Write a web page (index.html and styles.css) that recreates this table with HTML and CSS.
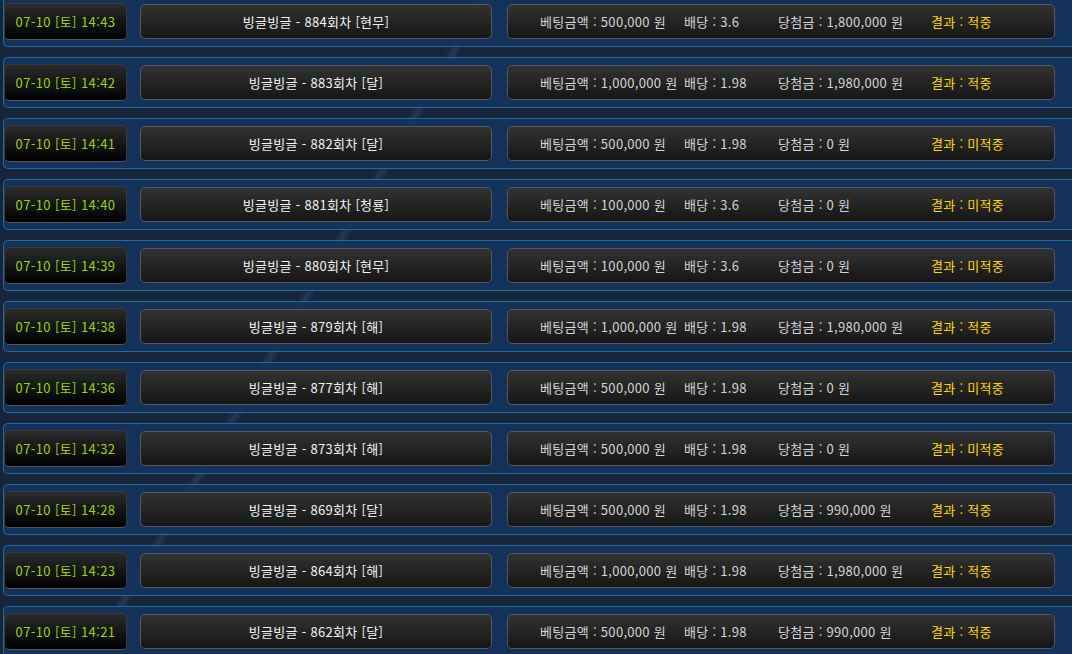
FILE: index.html
```html
<!DOCTYPE html>
<html lang="ko">
<head>
<meta charset="utf-8">
<title>베팅 내역</title>
<link rel="stylesheet" href="styles.css">
</head>
<body>
<div class="list">
  <div class="row"><div class="date">07-10 [토] 14:43</div><div class="name">빙글빙글 - 884회차 [현무]</div><div class="info"><span class="c1">베팅금액 : 500,000 원</span><span class="c2">배당 : 3.6</span><span class="c3">당첨금 : 1,800,000 원</span><span class="res">결과 : 적중</span></div></div>
  <div class="row"><div class="date">07-10 [토] 14:42</div><div class="name">빙글빙글 - 883회차 [달]</div><div class="info"><span class="c1">베팅금액 : 1,000,000 원</span><span class="c2">배당 : 1.98</span><span class="c3">당첨금 : 1,980,000 원</span><span class="res">결과 : 적중</span></div></div>
  <div class="row"><div class="date">07-10 [토] 14:41</div><div class="name">빙글빙글 - 882회차 [달]</div><div class="info"><span class="c1">베팅금액 : 500,000 원</span><span class="c2">배당 : 1.98</span><span class="c3">당첨금 : 0 원</span><span class="res">결과 : 미적중</span></div></div>
  <div class="row"><div class="date">07-10 [토] 14:40</div><div class="name">빙글빙글 - 881회차 [청룡]</div><div class="info"><span class="c1">베팅금액 : 100,000 원</span><span class="c2">배당 : 3.6</span><span class="c3">당첨금 : 0 원</span><span class="res">결과 : 미적중</span></div></div>
  <div class="row"><div class="date">07-10 [토] 14:39</div><div class="name">빙글빙글 - 880회차 [현무]</div><div class="info"><span class="c1">베팅금액 : 100,000 원</span><span class="c2">배당 : 3.6</span><span class="c3">당첨금 : 0 원</span><span class="res">결과 : 미적중</span></div></div>
  <div class="row"><div class="date">07-10 [토] 14:38</div><div class="name">빙글빙글 - 879회차 [해]</div><div class="info"><span class="c1">베팅금액 : 1,000,000 원</span><span class="c2">배당 : 1.98</span><span class="c3">당첨금 : 1,980,000 원</span><span class="res">결과 : 적중</span></div></div>
  <div class="row"><div class="date">07-10 [토] 14:36</div><div class="name">빙글빙글 - 877회차 [해]</div><div class="info"><span class="c1">베팅금액 : 500,000 원</span><span class="c2">배당 : 1.98</span><span class="c3">당첨금 : 0 원</span><span class="res">결과 : 미적중</span></div></div>
  <div class="row"><div class="date">07-10 [토] 14:32</div><div class="name">빙글빙글 - 873회차 [해]</div><div class="info"><span class="c1">베팅금액 : 500,000 원</span><span class="c2">배당 : 1.98</span><span class="c3">당첨금 : 0 원</span><span class="res">결과 : 미적중</span></div></div>
  <div class="row"><div class="date">07-10 [토] 14:28</div><div class="name">빙글빙글 - 869회차 [달]</div><div class="info"><span class="c1">베팅금액 : 500,000 원</span><span class="c2">배당 : 1.98</span><span class="c3">당첨금 : 990,000 원</span><span class="res">결과 : 적중</span></div></div>
  <div class="row"><div class="date">07-10 [토] 14:23</div><div class="name">빙글빙글 - 864회차 [해]</div><div class="info"><span class="c1">베팅금액 : 1,000,000 원</span><span class="c2">배당 : 1.98</span><span class="c3">당첨금 : 1,980,000 원</span><span class="res">결과 : 적중</span></div></div>
  <div class="row"><div class="date">07-10 [토] 14:21</div><div class="name">빙글빙글 - 862회차 [달]</div><div class="info"><span class="c1">베팅금액 : 500,000 원</span><span class="c2">배당 : 1.98</span><span class="c3">당첨금 : 990,000 원</span><span class="res">결과 : 적중</span></div></div>
</div>
</body>
</html>
```

FILE: styles.css
```css
html, body {
  margin: 0;
  padding: 0;
  height: 654px;
  overflow: hidden;
}
body {
  background-color: #17253b;
  background-image: linear-gradient(121deg, rgba(255,255,255,0) 32.6%, rgba(140,170,210,0.14) 33.1%, rgba(255,255,255,0) 33.6%);
  font-family: "Noto Sans CJK KR", "DejaVu Sans", sans-serif;
  font-size: 13px;
}
.list {
  display: flex;
  flex-direction: column;
  gap: 10px;
  margin-top: -4px;
  padding-left: 3px;
}
.row {
  box-sizing: border-box;
  width: 1100px;
  height: 51px;
  border: 1px solid #1d6c9c;
  border-right: none;
  border-radius: 5px 0 0 5px;
  background: rgba(18, 52, 94, 0.9);
  display: flex;
  align-items: center;
}
.date, .name, .info {
  box-sizing: border-box;
  display: flex;
  align-items: center;
  border-radius: 5px;
  white-space: nowrap;
}
.date {
  width: 123px;
  height: 37px;
  justify-content: center;
  color: #9ad40a;
  letter-spacing: 0.4px;
  background: linear-gradient(#2b2b2b, #000);
  border: 1px solid #3a3a3a;
  border-bottom-color: #555;
}
.name {
  width: 352px;
  height: 35px;
  margin-left: 13px;
  justify-content: center;
  color: #f2f2f2;
  letter-spacing: 0.3px;
  background: linear-gradient(#323232, #161616);
  border: 1px solid #575757;
}
.info {
  width: 548px;
  height: 35px;
  margin-left: 15px;
  padding-left: 32px;
  color: #d4d4d4;
  letter-spacing: 0.3px;
  background: linear-gradient(#323232, #161616);
  border: 1px solid #575757;
}
.c1 { width: 144px; flex: none; }
.c2 { width: 94px; flex: none; }
.c3 { width: 153px; flex: none; }
.res { color: #ffd800; }
```
